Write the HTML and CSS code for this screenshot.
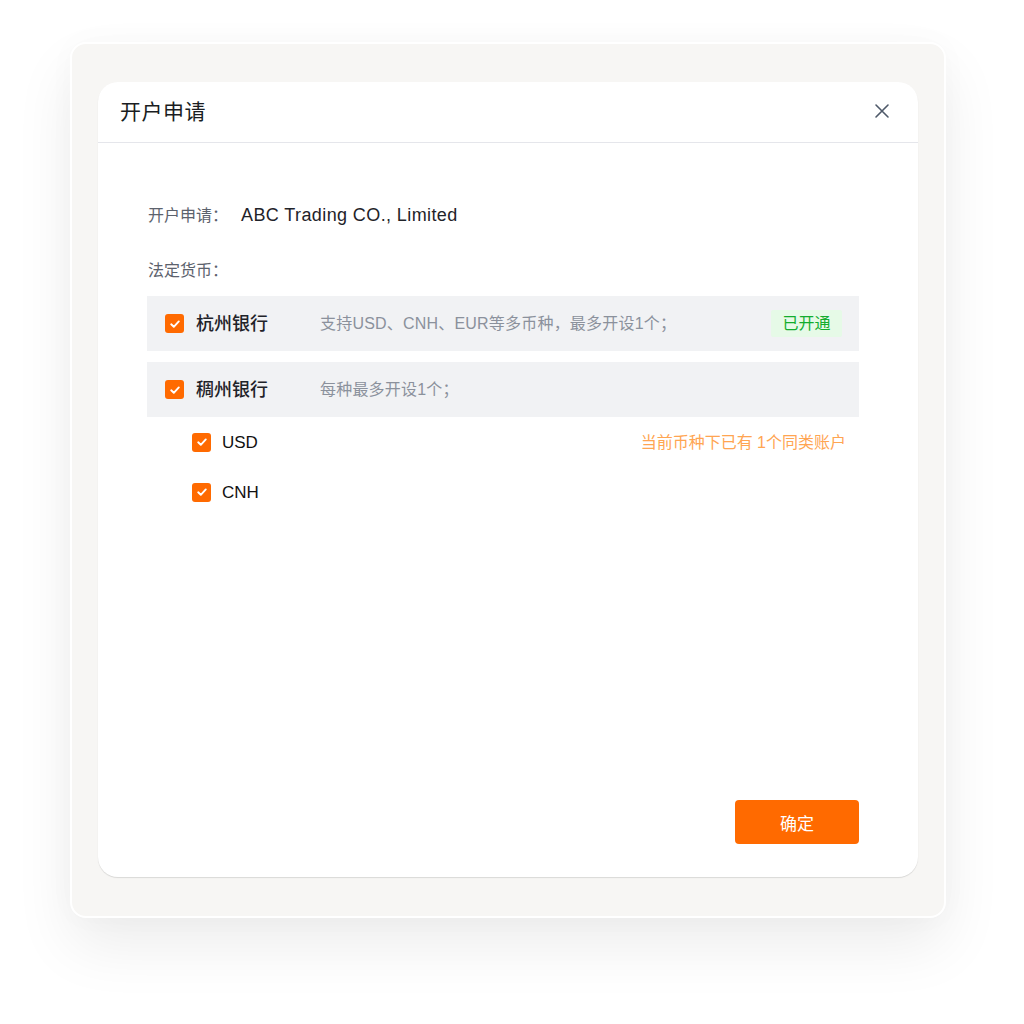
FILE: index.html
```html
<!DOCTYPE html>
<html lang="zh-CN">
<head>
<meta charset="utf-8">
<title>开户申请</title>
<link rel="stylesheet" href="styles.css">
</head>
<body>
<div class="frame">
  <div class="modal">
    <div class="modal-header">
      <div class="modal-title">开户申请</div>
      <button class="close" aria-label="关闭">
        <svg width="16" height="16" viewBox="0 0 16 16"><path d="M2 2 L14 14 M14 2 L2 14" stroke="#4e5969" stroke-width="1.6" stroke-linecap="round" fill="none"/></svg>
      </button>
    </div>
    <div class="modal-body">
      <div class="field">
        <span class="label">开户申请：</span>
        <span class="value">ABC Trading CO., Limited</span>
      </div>
      <div class="field field-currency">
        <span class="label">法定货币：</span>
      </div>

      <div class="bank-row">
        <span class="cb"><svg width="18" height="18" viewBox="0 0 18 18"><path d="M5.2 9.3 L7.8 11.8 L12.8 6.4" stroke="#fff" stroke-width="1.9" fill="none" stroke-linecap="round" stroke-linejoin="round"/></svg></span>
        <span class="bank-name">杭州银行</span>
        <span class="bank-desc">支持USD、CNH、EUR等多币种，最多开设1个；</span>
        <span class="badge">已开通</span>
      </div>

      <div class="bank-row bank-row-2">
        <span class="cb"><svg width="18" height="18" viewBox="0 0 18 18"><path d="M5.2 9.3 L7.8 11.8 L12.8 6.4" stroke="#fff" stroke-width="1.9" fill="none" stroke-linecap="round" stroke-linejoin="round"/></svg></span>
        <span class="bank-name">稠州银行</span>
        <span class="bank-desc">每种最多开设1个；</span>
      </div>

      <div class="sub-row">
        <span class="cb"><svg width="18" height="18" viewBox="0 0 18 18"><path d="M5.2 9.3 L7.8 11.8 L12.8 6.4" stroke="#fff" stroke-width="1.9" fill="none" stroke-linecap="round" stroke-linejoin="round"/></svg></span>
        <span class="cur">USD</span>
        <span class="warn">当前币种下已有 1个同类账户</span>
      </div>
      <div class="sub-row">
        <span class="cb"><svg width="18" height="18" viewBox="0 0 18 18"><path d="M5.2 9.3 L7.8 11.8 L12.8 6.4" stroke="#fff" stroke-width="1.9" fill="none" stroke-linecap="round" stroke-linejoin="round"/></svg></span>
        <span class="cur">CNH</span>
      </div>
    </div>
    <div class="modal-footer">
      <button class="btn-primary">确定</button>
    </div>
  </div>
</div>
</body>
</html>
```

FILE: styles.css
```css
* { box-sizing: border-box; }
html, body {
  margin: 0;
  padding: 0;
  background: #ffffff;
}
body {
  font-family: "Liberation Sans", "Noto Sans CJK SC", sans-serif;
  color: #1f2329;
  width: 1024px;
  height: 1024px;
  overflow: hidden;
}
.frame {
  margin: 42px 0 0 70px;
  width: 876px;
  height: 876px;
  background: #f7f6f4;
  border: 2px solid #ffffff;
  border-radius: 16px;
  padding: 38px 26px 39px;
  box-shadow: 0 28px 60px rgba(0, 0, 0, 0.075), 0 0 30px rgba(0, 0, 0, 0.025);
  display: flex;
}
.modal {
  flex: 1;
  background: #ffffff;
  border-radius: 20px;
  box-shadow: 0 1px 1px rgba(0, 0, 0, 0.12);
  display: flex;
  flex-direction: column;
}
.modal-header {
  height: 61px;
  border-bottom: 1px solid #e5e6eb;
  display: flex;
  align-items: center;
  justify-content: space-between;
  padding: 0 28px 0 22px;
}
.modal-title {
  font-family: "Noto Sans CJK SC", sans-serif;
  font-size: 21px;
  font-weight: 400;
  color: #1a1d22;
  letter-spacing: 0.5px;
  margin-bottom: 4px;
}
.close {
  border: 0;
  background: none;
  padding: 0;
  width: 16px;
  height: 16px;
  display: flex;
  cursor: pointer;
  margin-bottom: 2px;
}
.modal-body {
  flex: 1;
  padding: 60px 59px 0 49px;
  display: flex;
  flex-direction: column;
}
.field {
  display: flex;
  align-items: center;
  height: 24px;
  line-height: 24px;
}
.field-currency {
  margin-top: 31px;
  margin-bottom: 14px;
}
.label {
  font-size: 16px;
  color: #5c626d;
  width: 94px;
  padding-left: 1px;
  margin-top: 2px;
}
.value {
  font-size: 18px;
  color: #1f2329;
  letter-spacing: 0.4px;
}
.bank-row {
  height: 55px;
  background: #f1f2f4;
  display: flex;
  align-items: center;
  padding: 0 17px 0 18px;
}
.bank-row-2 {
  margin-top: 11px;
}
.cb {
  width: 19px;
  height: 19px;
  border-radius: 3px;
  background: #ff6a00;
  display: flex;
  align-items: center;
  justify-content: center;
  flex: none;
}
.bank-name {
  font-family: "Noto Sans CJK SC", sans-serif;
  font-size: 18px;
  font-weight: 500;
  color: #1f2329;
  margin-left: 12px;
  width: 124px;
  flex: none;
  margin-bottom: 3px;
}
.bank-desc {
  font-size: 16px;
  color: #8b919c;
  flex: 1;
  letter-spacing: 0.2px;
  margin-bottom: 3px;
}
.badge {
  font-family: "Noto Sans CJK SC", sans-serif;
  font-size: 16px;
  color: #13ad2d;
  background: #e6fae7;
  height: 27px;
  line-height: 24px;
  padding: 0 11.5px 3px;
  border-radius: 2px;
}
.sub-row {
  height: 50px;
  display: flex;
  align-items: center;
  padding: 0 13px 0 45px;
}
.cur {
  font-size: 17px;
  color: #111111;
  margin-left: 11px;
  flex: 1;
  margin-top: 1px;
}
.warn {
  font-size: 16px;
  color: #ffa552;
  margin-bottom: 3px;
}
.modal-footer {
  display: flex;
  justify-content: flex-end;
  padding: 0 59px 33px 0;
}
.btn-primary {
  width: 124px;
  height: 44px;
  border: 0;
  border-radius: 4px;
  background: #ff6a00;
  color: #ffffff;
  font-family: "Noto Sans CJK SC", sans-serif;
  font-size: 17px;
  cursor: pointer;
}
```
